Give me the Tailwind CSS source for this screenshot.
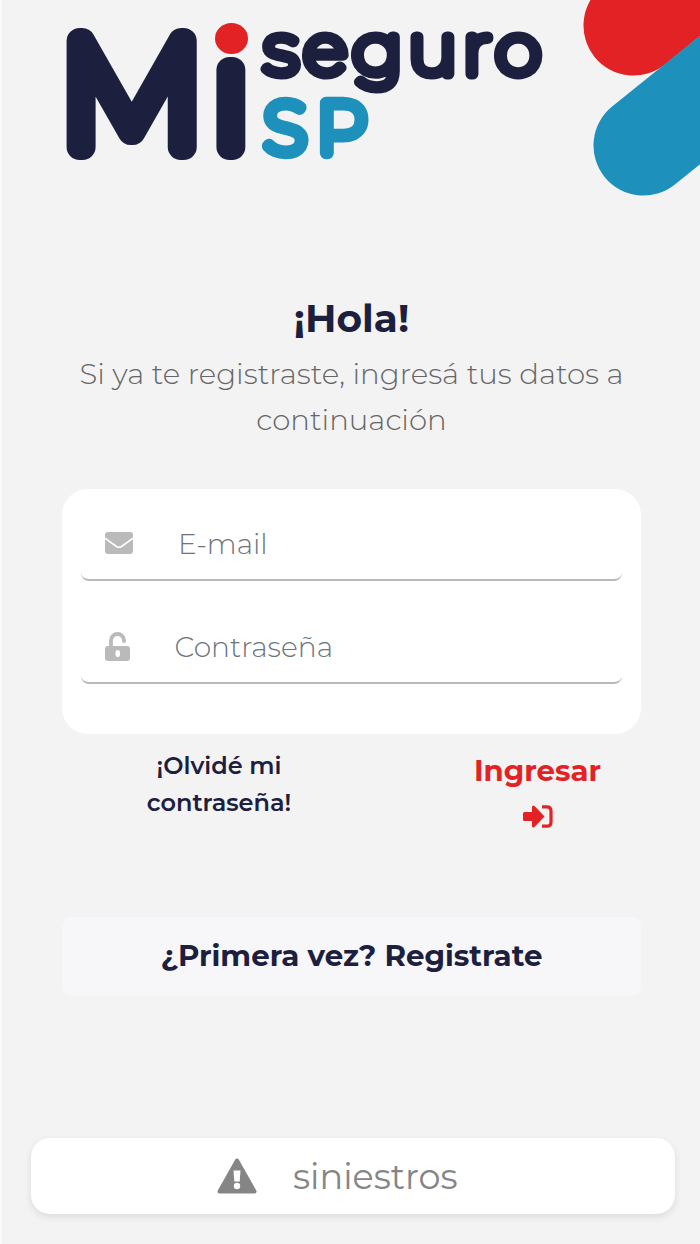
<!DOCTYPE html>
<html lang="es">
<head>
    <meta charset="UTF-8">
    <meta name="viewport" content="width=device-width, initial-scale=1.0">
    <title>Mi seguro SP</title>
    <script src="https://cdn.jsdelivr.net/npm/@tailwindcss/browser@4"></script>
</head>
<body class="bg-[#f3f3f3] font-['Montserrat','Inter',sans-serif] text-[#1c203e]">
    <div class="h-[1244px] overflow-hidden border-l-2 border-[#fafafa] flex flex-col">
        <!-- Logo -->
        <header class="h-[200px] -ml-[2px]">
            <svg class="w-[700px] h-[200px]" viewBox="0 0 700 200" stroke-linejoin="round" stroke-linecap="round">
                <path d="M633.500 25.500L760 -76.500" stroke="#e22224" stroke-width="100"/>
                <path d="M643.500 145.500L770 43.500" stroke="#1d90bc" stroke-width="100"/>
                <g fill="#1c203e" stroke="#1c203e" font-family="Montserrat" font-weight="100">
                    <text x="59.500" y="147" font-size="151" stroke-width="26">M</text>
                    <text x="212.500" y="147" font-size="147" stroke-width="26">ı</text>
                    <text transform="translate(264 74) scale(1.05 1)" font-size="70" letter-spacing="5.500" stroke-width="11">seguro</text>
                </g>
                <ellipse cx="231.500" cy="38.500" rx="16.500" ry="15.500" fill="#e22224"/>
                <text x="264" y="153" font-family="Montserrat" font-weight="100" font-size="70.500" letter-spacing="10.500" fill="#1d90bc" stroke="#1d90bc" stroke-width="12.500">SP</text>
            </svg>
        </header>

        <main class="ml-[60px] w-[579px] pt-[91px] flex flex-col">
            <h1 class="text-center text-[39px] leading-[54px] font-bold">¡Hola!</h1>
            <p class="mt-[6px] text-center text-[29.2px] leading-[46px] font-light text-[#666666]">Si ya te registraste, ingresá tus datos a<br>continuación</p>

            <form class="mt-[46px] h-[245px] rounded-[26px] bg-white px-[19px] pt-4">
                <div class="h-[76px] rounded-[8px] border-b-2 border-[#b9b9b9] flex items-center">
                    <svg class="mt-px ml-[24px] w-[28px] h-[22px]" viewBox="0 0 28 22">
                        <rect width="28" height="22" rx="3" fill="#bababa"/>
                        <path d="M-1 5.500L11.500 14.500Q14 16 16.500 14.500L29 5.500" fill="none" stroke="#fff" stroke-width="1.600"/>
                    </svg>
                    <span class="mt-[3px] ml-[45px] text-[28px] font-light text-[#6c757d]">E-mail</span>
                </div>
                <div class="mt-[27px] h-[76px] rounded-[8px] border-b-2 border-[#b9b9b9] flex items-center">
                    <svg class="mt-[3px] ml-[24px] w-[25px] h-[29px]" viewBox="0 0 25 29">
                        <path d="M6 15V8.500a6.500 6.500 0 0 1 13 0V9" fill="none" stroke="#bababa" stroke-width="3.800" stroke-linecap="round"/>
                        <rect y="14" width="25" height="15" rx="3" fill="#bababa"/>
                        <rect x="10.500" y="18" width="4.500" height="7" rx="2.200" fill="#fff"/>
                    </svg>
                    <span class="mt-[4px] ml-[44.500px] text-[28.1px] font-light text-[#6c757d]">Contraseña</span>
                </div>
            </form>

            <div class="flex h-[183px]">
                <a href="#" class="ml-[57px] w-[200px] pt-[13px] text-center text-[24px] leading-[37px] font-semibold">¡Olvidé mi<br>contraseña!</a>
                <a href="#" class="ml-[118.500px] w-[200px] pt-[14px] flex flex-col items-center text-[29.2px] leading-[46px] font-bold text-[#e22224]">
                    Ingresar
                    <svg class="mt-[11px] w-[30px] h-[23px]" viewBox="0 0 30 23">
                        <path d="M1.500 7H9V2Q9.500 -.500 11.500 1L21.500 11.500L11.500 22Q9.500 23.500 9 21V16H1.500Q0 16 0 14.500V8.500Q0 7 1.500 7Z" fill="#e22224"/>
                        <path d="M19 1.800H24Q28 1.800 28 6V17Q28 21.200 24 21.200H19" fill="none" stroke="#e22224" stroke-width="3.200"/>
                    </svg>
                </a>
            </div>

            <button class="h-[79px] rounded-[9px] bg-[#f7f7fa] pb-px text-[29.3px] font-bold">¿Primera vez? Registrate</button>
        </main>

        <!-- Acceso a siniestros -->
        <footer class="mt-[142px] ml-[29px] w-[644px] h-[76px] shrink-0 rounded-[19px] bg-white shadow-[0_3px_7px_rgba(60,50,80,0.12)] flex items-center text-[#858585]">
            <svg class="ml-[186px] w-[40px] h-[36px]" viewBox="0 0 40 36">
                <path d="M20 2.500L37.500 33.500H2.500Z" fill="#858585" stroke="#858585" stroke-width="4" stroke-linejoin="round"/>
                <path d="M16.500 12.500H23.500L22.700 23.500H17.300Z" fill="#fff"/>
                <circle cx="20" cy="28" r="3.200" fill="#fff"/>
            </svg>
            <span class="mt-[2px] ml-[36px] text-[35px] font-normal">siniestros</span>
        </footer>
    </div>
</body>
</html>
